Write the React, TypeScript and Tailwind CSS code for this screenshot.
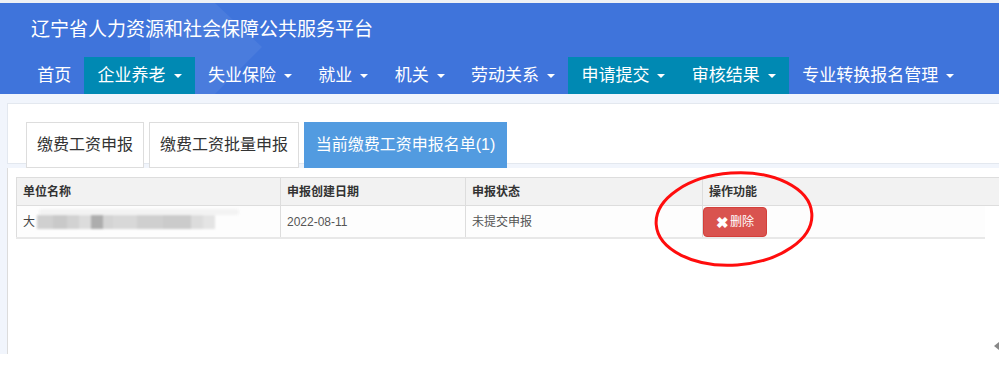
import React from "react"

const font = { fontFamily: '"Liberation Sans","Noto Sans CJK SC",sans-serif' }

const navItems = [
  { label: "首页", caret: false, active: false },
  { label: "企业养老", caret: true, active: true },
  { label: "失业保险", caret: true, active: false },
  { label: "就业", caret: true, active: false },
  { label: "机关", caret: true, active: false },
  { label: "劳动关系", caret: true, active: false },
  { label: "申请提交", caret: true, active: true },
  { label: "审核结果", caret: true, active: true },
  { label: "专业转换报名管理", caret: true, active: false },
]

function Caret() {
  return (
    <span className="inline-block ml-[8px] w-0 h-0 border-l-[4px] border-r-[4px] border-t-[4px] border-l-transparent border-r-transparent border-t-white" />
  )
}

function BlurredName() {
  const blocks = [
    { w: 16, c: "#d0d0d0" },
    { w: 14, c: "#c9c9c9" },
    { w: 12, c: "#d2d2d2" },
    { w: 12, c: "#dcdcdc" },
    { w: 12, c: "#adadad" },
    { w: 10, c: "#d4d4d4" },
    { w: 24, c: "#d8d8d8" },
    { w: 26, c: "#cfcfcf" },
    { w: 28, c: "#cbcbcb" },
    { w: 12, c: "#dcdcdc" },
    { w: 12, c: "#e4e4e4" },
  ]
  return (
    <div className="flex items-center">
      <span className="text-[12px] text-[#444]">大</span>
      <div className="relative ml-[2px]">
        <div className="absolute left-[2px] -top-[6px] w-[200px] h-[6px] bg-[#f3f3f3] rounded-full blur-[1px]" />
        <div className="flex h-[14px] blur-[1px]">
          {blocks.map((b, i) => (
            <div key={i} style={{ width: b.w, background: b.c }} />
          ))}
        </div>
      </div>
    </div>
  )
}

export default function App() {
  return (
    <div className="w-[999px] h-[372px] bg-white overflow-hidden relative" style={font}>
      <div className="h-[3px] bg-[#eef1f5]" />

      <div className="h-[91px] bg-[#3f74db] relative overflow-hidden">
        <svg className="absolute left-0 top-0" width="400" height="91">
          <polygon points="150,0 215,0 262,44 215,91 150,91" fill="#ffffff" opacity="0.06" />
        </svg>
        <div className="relative pl-[31px] mt-[14px] h-[26px] leading-[26px] text-[19px] text-white">
          辽宁省人力资源和社会保障公共服务平台
        </div>
        <div className="relative flex pl-[24px] mt-[14px] h-[37px]">
          {navItems.map((n) => (
            <div
              key={n.label}
              className={
                "flex items-center px-[13.2px] text-[17px] text-white " +
                (n.active ? "bg-[#0089b3]" : "")
              }
            >
              {n.label}
              {n.caret && <Caret />}
            </div>
          ))}
        </div>
      </div>

      <div className="h-[260px] bg-[#f1f5fc] pl-[7px] pt-[9px]">
        <div className="h-[61px] bg-white border border-[#e3e8ef] border-r-0 pt-[18px] pl-[18px]">
          <div className="flex gap-[5px] relative z-10">
            <div className="h-[46px] w-[118px] flex items-center justify-center border border-[#dddddd] bg-white text-[16px] text-[#333]">
              缴费工资申报
            </div>
            <div className="h-[46px] w-[150px] flex items-center justify-center border border-[#dddddd] bg-white text-[16px] text-[#333]">
              缴费工资批量申报
            </div>
            <div className="h-[46px] w-[203px] flex items-center justify-center bg-[#529be0] text-[16px] text-white">
              当前缴费工资申报名单(1)
            </div>
          </div>
        </div>

        <div className="mt-[4px] h-[186px] bg-white border-l border-[#dcdcdc] pl-[8px] pt-[9px]">
          <div className="w-[1000px] text-[12px]">
            <div className="flex h-[29px] bg-[#f2f2f2] border-t border-b border-[#dddddd] font-bold text-[#333]">
              <div className="w-[264px] px-[6px] flex items-center border-l border-[#dddddd]">单位名称</div>
              <div className="w-[185px] px-[6px] flex items-center border-l border-[#dddddd]">申报创建日期</div>
              <div className="w-[237px] px-[6px] flex items-center border-l border-[#dddddd]">申报状态</div>
              <div className="flex-1 px-[6px] flex items-center border-l border-[#dddddd]">操作功能</div>
            </div>
            <div className="flex h-[33px] w-[969px] bg-[#fdfdfd] border-b-2 border-[#e8e8e8] text-[#555]">
              <div className="w-[264px] px-[6px] flex items-center border-l border-[#dddddd]">
                <BlurredName />
              </div>
              <div className="w-[185px] px-[6px] flex items-center border-l border-[#dddddd]">2022-08-11</div>
              <div className="w-[237px] px-[6px] flex items-center border-l border-[#dddddd]">未提交申报</div>
              <div className="flex-1 flex items-center border-l border-[#dddddd]">
                <button className="h-[30px] w-[64px] mt-[1px] flex items-center justify-center rounded-[4px] bg-[#d9534f] border border-[#d43f3a] text-white text-[12px]">
                  <span className="font-bold text-[15px] leading-none mr-[1px]">✖</span>删除
                </button>
              </div>
            </div>
          </div>
        </div>
      </div>

      <svg className="absolute left-[650px] top-[167px]" width="170" height="104">
        <ellipse cx="84" cy="52" rx="78" ry="46" fill="none" stroke="#ff0d0d" strokeWidth="3" transform="rotate(-4 84 52)" />
      </svg>

      <svg className="absolute left-[993px] top-[342px]" width="6" height="8">
        <polygon points="6,0 6,8 1,4" fill="#888" />
      </svg>
    </div>
  )
}
